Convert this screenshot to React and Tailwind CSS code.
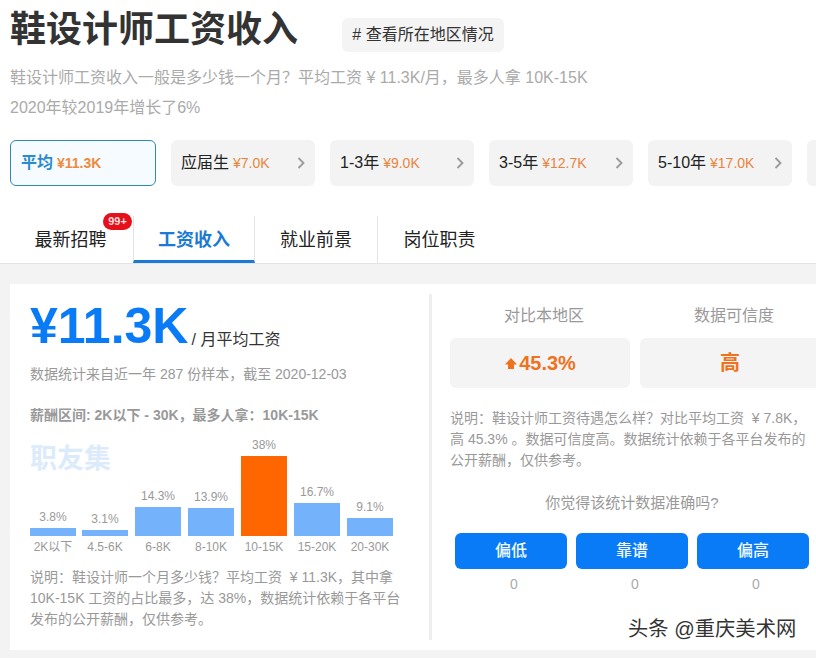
const FONT = "font-['Liberation_Sans','Noto_Sans_CJK_SC',sans-serif]";

function Chevron() {
  return (
    <svg width="10" height="14" viewBox="0 0 10 14" fill="none" className="shrink-0">
      <path d="M2.5 2l5 5-5 5" stroke="#9a9a9a" strokeWidth="1.8" />
    </svg>
  );
}

function Pill({ label, value }) {
  return (
    <div className="flex h-[46px] w-[144px] shrink-0 items-center justify-between rounded-md bg-[#f3f3f3] pl-[10px] pr-[9px]">
      <div className="flex items-baseline whitespace-nowrap">
        <span className="text-base text-[#222]">{label}</span>
        <span className="ml-[4px] text-sm text-[#e8843c]">{value}</span>
      </div>
      <Chevron />
    </div>
  );
}

function Tab({ children, active, badge, width, border = true }) {
  return (
    <div
      className={`relative flex h-[47px] shrink-0 items-center justify-center text-lg ${width} ${border ? "border-r border-[#e4e4e4]" : ""} ${
        active ? "border-b-[3px] border-b-[#1a7ad4] pt-[3px] font-bold text-[#1a7ad4]" : "text-[#222]"
      }`}
    >
      {children}
      {badge && (
        <span className="absolute left-[103px] top-[-3px] flex h-[17px] w-[29px] items-center justify-center rounded-full bg-[#e60f1c] text-[11px] font-bold text-[#f6dede]">
          {badge}
        </span>
      )}
    </div>
  );
}

const bars = [
  ["3.8%", 8, "2K以下", 6],
  ["3.1%", 6, "4.5-6K", 7],
  ["14.3%", 29, "6-8K", 7],
  ["13.9%", 28, "8-10K", 7],
  ["38%", 80, "10-15K", 7],
  ["16.7%", 33, "15-20K", 7],
  ["9.1%", 18, "20-30K", 0],
];

function Bar({ pct, h, label, hot, gap }) {
  return (
    <div className="flex w-[46px] shrink-0 flex-col items-center" style={{ marginRight: gap }}>
      <span className="mb-[4px] whitespace-nowrap text-xs leading-[14px] text-[#999]">{pct}</span>
      <div className={`w-[46px] ${hot ? "bg-[#ff6600]" : "bg-[#74b2fb]"}`} style={{ height: h }} />
      <span className="mt-[3px] whitespace-nowrap text-xs leading-[17px] text-[#999]">{label}</span>
    </div>
  );
}

function Vote({ label }) {
  return (
    <div className="flex w-[112px] flex-col items-center">
      <div className="flex h-9 w-full items-center justify-center rounded-md bg-[#0a7bf6] text-base font-medium text-[#f2fbff]">
        {label}
      </div>
      <span className="mt-[6px] pl-[6px] text-sm leading-[18px] text-[#aaa]">0</span>
    </div>
  );
}

const NOTE_LEFT = "说明：鞋设计师一个月多少钱？平均工资 \u00a0¥ 11.3K，其中拿 10K-15K 工资的占比最多，达 38%，数据统计依赖于各平台发布的公开薪酬，仅供参考。";
const NOTE_RIGHT = "说明：鞋设计师工资待遇怎么样？对比平均工资 \u00a0¥ 7.8K，高 45.3% 。数据可信度高。数据统计依赖于各平台发布的公开薪酬，仅供参考。";

export default function App() {
  return (
    <div className={`relative h-[658px] w-[816px] overflow-hidden bg-white ${FONT}`}>
      <div className="px-[10px]">
        <div className="flex h-[60px] items-center">
          <h1 className="text-[36px] font-bold leading-none text-[#333]">鞋设计师工资收入</h1>
          <div className="ml-[44px] mt-[10px] flex h-[34px] w-[162px] items-center justify-center rounded-md bg-[#f4f4f4] text-base text-[#333]">
            # 查看所在地区情况
          </div>
        </div>
        <p className="mt-[3px] whitespace-nowrap text-base leading-[29px] text-[#aaa]">
          鞋设计师工资收入一般是多少钱一个月？平均工资 ¥ 11.3K/月，最多人拿 10K-15K
        </p>
        <p className="mt-[1px] whitespace-nowrap text-base leading-[29px] text-[#aaa]">2020年较2019年增长了6%</p>
        <div className="mt-[18px] flex gap-[15px]">
          <div className="flex h-[46px] w-[146px] shrink-0 items-center rounded-md border border-[#2f8ab5] bg-[#f6fbff] pl-[10px]">
            <span className="text-base font-bold text-[#2a8ccc]">平均</span>
            <span className="ml-[4px] text-sm font-bold text-[#ee8a3c]">¥11.3K</span>
          </div>
          <Pill label="应届生" value="¥7.0K" />
          <Pill label="1-3年" value="¥9.0K" />
          <Pill label="3-5年" value="¥12.7K" />
          <Pill label="5-10年" value="¥17.0K" />
          <div className="h-[46px] w-[144px] shrink-0 rounded-md bg-[#f3f3f3]" />
        </div>
      </div>

      <div className="mt-[30px] flex h-[48px] border-b border-[#e4e4e4]">
        <Tab width="w-[133px] pl-[8px]" badge="99+" border={false}>最新招聘</Tab>
        <Tab width="w-[122px] border-l border-l-[#e4e4e4]" active>工资收入</Tab>
        <Tab width="w-[123px]">就业前景</Tab>
        <Tab width="w-[123px]" border={false}>岗位职责</Tab>
      </div>

      <div className="h-[394px] bg-[#f3f3f4] pl-[10px] pt-[20px]">
        <div className="flex h-[366px] w-[806px] items-stretch bg-white py-[10px]">
          <div className="relative w-[420px] shrink-0 pl-[20px] pt-[7px]">
            <div className="flex items-end">
              <span className="text-[50px] font-bold leading-[50px] text-[#0a7bf6]">¥11.3K</span>
              <span className="mb-[1px] ml-[3px] text-base leading-[20px] text-[#333]">/ 月平均工资</span>
            </div>
            <p className="mt-[13px] text-sm leading-[20px] text-[#999]">数据统计来自近一年 287 份样本，截至 2020-12-03</p>
            <p className="mt-[21px] text-sm font-bold leading-[20px] text-[#999]">薪酬区间: 2K以下 - 30K，最多人拿：10K-15K</p>
            <span className="absolute left-[20px] top-[149px] text-[27px] font-bold leading-[32px] text-[#dcebfb]">职友集</span>
            <div className="mt-[9px] flex h-[122px] items-end">
              {bars.map(([pct, h, label, gap]) => (
                <Bar key={label} pct={pct} h={h} label={label} hot={pct === "38%"} gap={gap} />
              ))}
            </div>
            <p className="mt-[11px] w-[376px] text-sm leading-[21px] text-[#999]">{NOTE_LEFT}</p>
          </div>

          <div className="w-[3px] shrink-0 -translate-x-px bg-[#eeeeee]" />

          <div className="min-w-0 flex-1 pl-[17px]">
            <div className="flex gap-[10px]">
              <div className="w-[180px] shrink-0">
                <div className="mb-[11px] mt-[10px] pl-[8px] text-center text-base leading-[23px] text-[#999]">对比本地区</div>
                <div className="flex h-[50px] items-center justify-center rounded-md bg-[#f4f4f5] text-xl font-bold text-[#ee7220]">
                  <svg width="14" height="13" viewBox="0 0 14 13" className="mr-[1px]">
                    <path d="M7 1l6 6.5H10V12H4V7.5H1z" fill="#ee7220" />
                  </svg>
                  45.3%
                </div>
              </div>
              <div className="w-[180px] shrink-0">
                <div className="mb-[11px] mt-[10px] pl-[8px] text-center text-base leading-[23px] text-[#999]">数据可信度</div>
                <div className="flex h-[50px] items-center justify-center rounded-md bg-[#f4f4f5] text-xl font-bold text-[#ee7220]">高</div>
              </div>
            </div>
            <p className="mt-[20px] w-[364px] text-sm leading-[21px] text-[#999]">{NOTE_RIGHT}</p>
            <div className="mt-[22px] w-[364px] text-center text-[15px] leading-[20px] text-[#999]">你觉得该统计数据准确吗?</div>
            <div className="ml-[5px] mt-[20px] flex gap-[9px]">
              <Vote label="偏低" />
              <Vote label="靠谱" />
              <Vote label="偏高" />
            </div>
          </div>
        </div>
      </div>

      <span className="absolute left-[628px] top-[617px] text-[20.3px] leading-[24px] text-[#333] [text-shadow:0_0_3px_#fff]">头条 @重庆美术网</span>
    </div>
  );
}
